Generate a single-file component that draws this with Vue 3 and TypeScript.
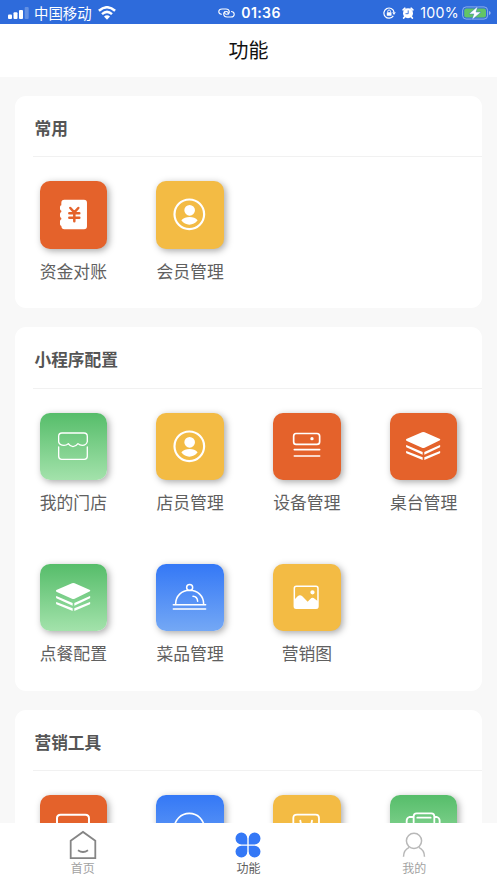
<script setup lang="ts">
type Tone = 'orange' | 'yellow' | 'green' | 'blue'
type IconName =
  | 'ledger' | 'user' | 'store' | 'device' | 'layers'
  | 'dish' | 'image' | 'screen' | 'circle' | 'bag' | 'printer'

interface Entry {
  label: string
  tone: Tone
  icon: IconName
}

interface Section {
  title: string
  entries: Entry[]
}

const sections: Section[] = [
  {
    title: '常用',
    entries: [
      { label: '资金对账', tone: 'orange', icon: 'ledger' },
      { label: '会员管理', tone: 'yellow', icon: 'user' },
    ],
  },
  {
    title: '小程序配置',
    entries: [
      { label: '我的门店', tone: 'green', icon: 'store' },
      { label: '店员管理', tone: 'yellow', icon: 'user' },
      { label: '设备管理', tone: 'orange', icon: 'device' },
      { label: '桌台管理', tone: 'orange', icon: 'layers' },
      { label: '点餐配置', tone: 'green', icon: 'layers' },
      { label: '菜品管理', tone: 'blue', icon: 'dish' },
      { label: '营销图', tone: 'yellow', icon: 'image' },
    ],
  },
  {
    title: '营销工具',
    entries: [
      { label: '', tone: 'orange', icon: 'screen' },
      { label: '', tone: 'blue', icon: 'circle' },
      { label: '', tone: 'yellow', icon: 'bag' },
      { label: '', tone: 'green', icon: 'printer' },
    ],
  },
]

// Tile artwork on a 202 x 202 grid; "line" is stroked white, "fill" is solid white.
const art: Record<IconName, { line?: string; fill?: string; width?: number }> = {
  ledger: {
    fill: 'M73 56H132Q141 56 141 65V136Q141 145 132 145H73Q65 145 64 135Q60 134 60 130V121Q60 117 64 115V111Q60 109 60 105V99Q60 95 64 93V89Q60 87 60 83V78Q60 74 64 73V65Q64 56 73 56Z',
  },
  user: {
    line: 'M144.500 100A44.500 44.500 0 1 1 55.500 100A44.500 44.500 0 1 1 144.500 100Z',
    fill: 'M117 88A16 16 0 1 1 85 88A16 16 0 1 1 117 88ZM76 118Q86 108 101 108Q116 108 125 118Q115 131 100 131Q86 131 76 118Z',
    width: 6.5,
  },
  store: {
    line: 'M56 87V70Q56 60 66 60H132Q142 60 142 70V86Q139 97 127 97Q119 97 114 92Q107 101 99 101Q91 101 85 92Q79 97 72 97Q59 97 56 87M56 102V130Q56 139 65 139H133Q142 139 142 130V102',
    width: 4,
  },
  device: {
    line: 'M69 61.500H132Q140 61.500 140 69.500V86Q140 94 132 94H69Q62 94 62 86V69.500Q62 61.500 69 61.500ZM64 110H140M64 129H140',
    fill: 'M122 77A5 5 0 1 1 112 77A5 5 0 1 1 122 77Z',
    width: 5,
  },
  layers: {
    fill: 'M49 78L96 58Q100 56 104 58L150 78Q152 80 150 82L104 104Q100 106 96 104L49 83Q47 80 49 78ZM49 96L98 117V125L49 103Q47 98 49 96ZM150 96L103 117V125L150 103Q152 98 150 96ZM49 114L98 133V141L49 121Q47 117 49 114ZM150 114L103 133V141L150 121Q152 117 150 114Z',
  },
  dish: {
    line: 'M110 70.500A9 9 0 1 1 92 70.500A9 9 0 1 1 110 70.500ZM59 120C59 96 77 79 101 79C125 79 143 96 143 120M52 122H149M52 135H149M111 97Q124 98 125 112',
    width: 4.5,
  },
  image: {
    line: 'M70 67H129Q135 67 135 73V127Q135 133 129 133H70Q64 133 64 127V73Q64 67 70 67Z',
    fill: 'M125 85A6.500 6.500 0 1 1 112 85A6.500 6.500 0 1 1 125 85ZM64 107L74 97Q81 90 88 97L104 113L112 105Q118 98 125 104L135 112V133H64Z',
    width: 4.5,
  },
  screen: {
    line: 'M62 59H136Q147 59 147 70V130Q147 140 136 140H62Q51 140 51 130V70Q51 59 62 59Z',
    width: 6,
  },
  circle: {
    line: 'M145 100A45 45 0 1 1 55 100A45 45 0 1 1 145 100Z',
    width: 5,
  },
  bag: {
    line: 'M72 59H128Q138 59 138 69V130Q138 140 128 140H72Q61 140 61 130V69Q61 59 72 59ZM82 77Q84 96 100 96Q115 96 117 77',
    width: 5.5,
  },
  printer: {
    line: 'M71 82V64Q71 55 80 55H124Q133 55 133 64V82M71 66H58Q50 69 50 77V120H149V77Q149 69 141 66H133M82 68H122',
    width: 5.5,
  },
}
</script>

<template>
  <div class="screen">
    <header class="status">
      <div class="side">
        <svg class="signal" width="21" height="12" viewBox="0 0 21 12" fill="#fff">
          <rect x="0" y="7.500" width="4" height="4.500" rx="1" />
          <rect x="5.500" y="5.300" width="4" height="6.700" rx="1" />
          <rect x="11" y="3" width="4" height="9" rx="1" />
          <rect x="16.700" y="0" width="4" height="12" rx="1" opacity=".25" />
        </svg>
        <span class="carrier">中国移动</span>
        <svg class="wifi" width="18" height="14" viewBox="0 0 18 14" fill="none" stroke="#fff" stroke-width="2.500">
          <path d="M.9 4.800Q9-2.300 17.100 4.800M4 8.100Q9 3.700 14 8.100" />
          <path d="M6 10.600Q9 8 12 10.600L9 13.700Z" fill="#fff" stroke="none" />
        </svg>
      </div>
      <div class="clock">
        <svg width="17" height="10" viewBox="0 0 17 10" fill="none" stroke="#fff" stroke-width="1.100" stroke-linecap="round">
          <path d="M3.500 6.200C-.2 5.800-.2 1 4 1H8C12 1 12.500 6.300 8.800 6.300C7 6.300 6.200 5 6.700 3.900" />
          <path d="M13.500 3.500C17.200 4 17.200 9 13 9H9C5 9 4.500 3.500 8.200 3.500C10 3.500 10.800 4.800 10.300 6" />
        </svg>
        <span>01:36</span>
      </div>
      <div class="side right">
        <svg width="13" height="12" viewBox="0 0 13 12" fill="none" stroke="#fff" stroke-width="1.200">
          <path d="M10.300 8.900A5.100 5.100 0 1 1 11 5" />
          <path d="M9.200 5.200H12.800L11 7.900Z" fill="#fff" stroke="none" />
          <rect x="3.800" y="5.200" width="4.700" height="3.500" rx=".5" fill="#fff" stroke="none" />
          <path d="M4.700 5.300V4.300Q4.700 3 6.100 3T7.500 4.300V5.300" stroke-width=".9" />
        </svg>
        <svg class="alarm" width="12" height="12" viewBox="0 0 12 12">
          <circle cx="6" cy="6.300" r="5" fill="#fff" />
          <path d="M1.200 2.800L2.800 1.300M10.800 2.800L9.200 1.300M2.500 10L1.700 11M9.500 10L10.300 11" stroke="#fff" stroke-width="1.800" stroke-linecap="round" />
          <path d="M6.200 3.400V6.700H3.500" fill="none" stroke="#2e6bdb" stroke-width=".9" />
        </svg>
        <span class="percent">100%</span>
        <svg class="battery" width="29" height="14" viewBox="0 0 29 14">
          <rect x=".6" y=".9" width="25" height="12.200" rx="3.600" fill="none" stroke="#fff" stroke-opacity=".45" />
          <path d="M27 5V9Q28.700 8.400 28.700 7T27 5Z" fill="#fff" opacity=".5" />
          <rect x="2.200" y="2.500" width="21.800" height="9" rx="2" fill="#62c466" />
          <path d="M15.800.2L7 7.900H11.900L9.900 13.900L19 6.100H14Z" fill="#fff" stroke="#2e6bdb" stroke-width=".4" />
        </svg>
      </div>
    </header>

    <h1 class="navbar">功能</h1>

    <main class="content">
      <section v-for="section in sections" :key="section.title" class="card">
        <h2 class="card-title">{{ section.title }}</h2>
        <div class="grid">
          <div v-for="(entry, i) in section.entries" :key="i" class="entry">
            <div class="tile" :class="entry.tone">
              <svg viewBox="0 0 202 202">
                <path
                  v-if="art[entry.icon].line"
                  :d="art[entry.icon].line"
                  fill="none"
                  stroke="#fff"
                  stroke-linecap="round"
                  stroke-linejoin="round"
                  :stroke-width="art[entry.icon].width"
                />
                <path v-if="art[entry.icon].fill" :d="art[entry.icon].fill" fill="#fff" />
                <path
                  v-if="entry.icon === 'ledger'"
                  d="M91 81L103 94L115 81M88 97H118M88 110H118M103 94V121"
                  fill="none"
                  stroke="#e4622b"
                  stroke-width="7.500"
                  stroke-linecap="round"
                />
              </svg>
            </div>
            <span class="label">{{ entry.label }}</span>
          </div>
        </div>
      </section>
    </main>

    <nav class="tabbar">
      <div class="tab">
        <svg width="30" height="30" viewBox="0 0 30 30" fill="none" stroke="#858585" stroke-width="1.800">
          <path d="M2.700 10.700L15 1.900L27.300 10.700V28.200H2.700Z" />
          <path d="M10 20.300Q15 23.700 20 20.300" />
        </svg>
        <span>首页</span>
      </div>
      <div class="tab active">
        <svg width="30" height="30" viewBox="0 0 30 30" fill="#3478f6">
          <path d="M14.300 14.400H8.500A5.900 5.900 0 1 1 14.300 8.500Z" />
          <path d="M15.700 14.400V8.500A5.900 5.900 0 1 1 21.500 14.400Z" />
          <path d="M14.300 15.700V21.500A5.900 5.900 0 1 1 8.500 15.700Z" />
          <path d="M15.700 15.700H21.500A5.900 5.900 0 1 1 15.700 21.500Z" />
        </svg>
        <span>功能</span>
      </div>
      <div class="tab">
        <svg width="30" height="30" viewBox="0 0 30 30" fill="none" stroke="#b8b8b8" stroke-width="1.500">
          <circle cx="15" cy="10.800" r="7.600" />
          <path d="M4.500 26.700C4.600 22.300 7 18.900 10.200 17.400M25.500 26.700C25.400 22.300 23 18.900 19.800 17.400" />
        </svg>
        <span>我的</span>
      </div>
    </nav>
  </div>
</template>

<style>
body {
  overflow: hidden;
}
</style>

<style scoped>
.screen {
  display: flex;
  flex-direction: column;
  height: 883px;
  overflow: hidden;
  background: #f8f8f8;
  font-family: "Noto Sans CJK SC", sans-serif;
}

.status {
  flex: none;
  display: grid;
  grid-template-columns: 1fr auto 1fr;
  align-items: center;
  height: 24px;
  padding: 1px 6px 0 8px;
  box-sizing: border-box;
  background: #2e6bdb;
  color: #fff;
}

.side,
.clock {
  display: flex;
  align-items: center;
}

.right {
  justify-content: flex-end;
}

.carrier {
  margin: 0 6px 0 5px;
  font-size: 14.4px;
  line-height: 22px;
}

.clock {
  gap: 6px;
  font: 600 14px/22px Inter, sans-serif;
  letter-spacing: 0.4px;
}

.alarm {
  margin: 0 6px;
}

.percent {
  font: 400 14.2px/22px Inter, sans-serif;
  letter-spacing: 0.3px;
}

.battery {
  margin-left: 3px;
}

.navbar {
  flex: none;
  height: 53px;
  margin: 0;
  background: #fff;
  color: #111;
  font-size: 20px;
  font-weight: 400;
  line-height: 52px;
  text-align: center;
}

.content {
  flex: 1;
  min-height: 0;
  display: flex;
  flex-direction: column;
  gap: 19px;
  padding: 18.800px 15px 0;
  overflow: hidden;
}

.card {
  flex: none;
  border-radius: 11px;
  background: #fff;
}

.card-title {
  height: 61.500px;
  margin: 0 0 0 18px;
  padding: 3px 0 0 1.500px;
  box-sizing: border-box;
  border-bottom: 1px solid #f1f1f1;
  color: #555;
  font-size: 16.700px;
  font-weight: 700;
  line-height: 58px;
}

.grid {
  display: grid;
  grid-template-columns: repeat(4, 1fr);
}

.entry {
  display: flex;
  flex-direction: column;
  align-items: center;
  height: 151px;
  padding-top: 24px;
  box-sizing: border-box;
}

.tile {
  width: 67.300px;
  height: 67.300px;
  border-radius: 10px;
  box-shadow: 2px 2px 7px rgba(0, 0, 0, 0.34);
}

.tile svg {
  display: block;
  width: 100%;
  height: 100%;
}

.orange {
  background: #e4622b;
}

.yellow {
  background: #f3bb44;
}

.green {
  background: linear-gradient(#56bd6a, #a3e2ab);
}

.blue {
  background: linear-gradient(#3478f6, #74a8f5);
}

.label {
  margin-top: 10px;
  color: #606060;
  font-size: 16.800px;
  line-height: 24px;
}

.tabbar {
  flex: none;
  display: grid;
  grid-template-columns: repeat(3, 1fr);
  height: 60px;
  background: #fff;
}

.tab {
  display: flex;
  flex-direction: column;
  align-items: center;
  padding-top: 7px;
  color: #a2a2a2;
  font-size: 12px;
  line-height: 16px;
}

.tab.active {
  color: #606060;
}
</style>
